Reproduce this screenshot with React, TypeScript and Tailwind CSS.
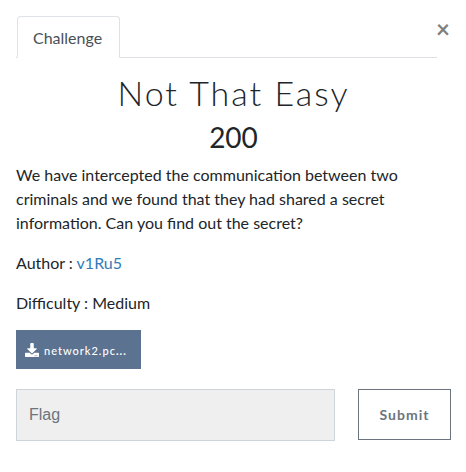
function DownloadIcon() {
  return (
    <svg viewBox="0 0 512 512" aria-hidden="true" className="mx-px size-[14px] shrink-0 fill-current">
      <path d="M216 0h80c13.300 0 24 10.700 24 24v168h87.700c17.800 0 26.700 21.500 14.100 34.100L269.700 378.300c-7.500 7.500-19.800 7.500-27.300 0L90.100 226.100c-12.600-12.600-3.700-34.100 14.100-34.100H192V24c0-13.300 10.700-24 24-24zm296 376v112c0 13.300-10.700 24-24 24H24c-13.300 0-24-10.700-24-24V376c0-13.300 10.700-24 24-24h146.700l49 49c20.100 20.100 52.500 20.100 72.600 0l49-49H488c13.300 0 24 10.700 24 24zm-124 88c0-11-9-20-20-20s-20 9-20 20 9 20 20 20 20-9 20-20zm64 0c0-11-9-20-20-20s-20 9-20 20 9 20 20 20 20-9 20-20z" />
    </svg>
  );
}

export default function App() {
  return (
    <main className="bg-white pt-4 pr-[15px] pb-8 pl-4 font-['Lato',sans-serif] text-base leading-6 text-[#212529]">
      <header className="flex items-start pr-[2px]">
        <div role="tablist" className="flex flex-1 border-b border-[#dee2e6] pl-px">
          <button
            type="button"
            role="tab"
            aria-selected="true"
            className="-mb-px h-[42px] rounded-t border border-[#dee2e6] border-b-white bg-white pt-px pr-[17px] pl-[15px] text-[#495057]"
          >
            Challenge
          </button>
        </div>
        <button
          type="button"
          aria-label="Close"
          className="flex h-[26px] w-3 items-center justify-center text-2xl leading-6 font-bold text-[#808080]"
        >
          ×
        </button>
      </header>

      <section role="tabpanel">
        <h2 className="mt-[15px] text-center text-[34px] leading-10 font-light tracking-[2px]">Not That Easy</h2>
        <h3 className="mt-[6px] text-center text-[28px] leading-9">200</h3>
        <p className="mt-2">
          We have intercepted the communication between two criminals and we found that they had shared a secret
          information. Can you find out the secret?
        </p>
        <p className="mt-4">
          Author :{" "}
          <a href="#author" className="text-[#337ab7]">
            v1Ru5
          </a>
        </p>
        <p className="mt-4">Difficulty : Medium</p>

        <a
          href="#network2"
          className="mt-[15px] flex h-[39px] w-[125px] items-center gap-1 bg-[#5b7290] px-2 pt-px text-[11px] leading-4 text-white"
        >
          <DownloadIcon />
          <span className="truncate pt-[2px] font-medium tracking-[1px]">
            network2.pc<b>...</b>
          </span>
        </a>

        <form className="mt-5 flex gap-[23px]" onSubmit={(event) => event.preventDefault()}>
          <input
            type="text"
            name="flag"
            aria-label="Flag"
            placeholder="Flag"
            className="h-[52px] min-w-0 flex-1 border border-[#ced4da] bg-[#efefef] px-3 font-['Liberation_Sans',sans-serif] placeholder:text-[#6c757d]"
          />
          <button
            type="submit"
            className="h-[51px] w-[93px] border border-[#6c757d] bg-white text-sm font-bold tracking-[1px] text-[#6c757d]"
          >
            Submit
          </button>
        </form>
      </section>
    </main>
  );
}
